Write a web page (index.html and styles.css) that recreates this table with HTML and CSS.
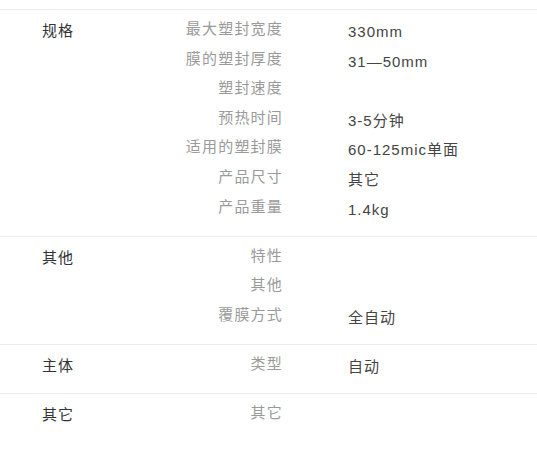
FILE: index.html
```html
<!DOCTYPE html>
<html lang="zh-CN">
<head>
<meta charset="utf-8">
<title>规格参数</title>
<link rel="stylesheet" href="styles.css">
</head>
<body>
<div class="spec">
  <section class="group">
    <div class="group-title">规格</div>
    <div class="rows">
      <div class="row"><div class="label">最大塑封宽度</div><div class="value">330mm</div></div>
      <div class="row"><div class="label">膜的塑封厚度</div><div class="value">31—50mm</div></div>
      <div class="row"><div class="label">塑封速度</div><div class="value"></div></div>
      <div class="row"><div class="label">预热时间</div><div class="value">3-5分钟</div></div>
      <div class="row"><div class="label">适用的塑封膜</div><div class="value">60-125mic单面</div></div>
      <div class="row"><div class="label">产品尺寸</div><div class="value">其它</div></div>
      <div class="row"><div class="label">产品重量</div><div class="value">1.4kg</div></div>
    </div>
  </section>
  <section class="group">
    <div class="group-title">其他</div>
    <div class="rows">
      <div class="row"><div class="label">特性</div><div class="value"></div></div>
      <div class="row"><div class="label">其他</div><div class="value"></div></div>
      <div class="row"><div class="label">覆膜方式</div><div class="value">全自动</div></div>
    </div>
  </section>
  <section class="group">
    <div class="group-title">主体</div>
    <div class="rows">
      <div class="row"><div class="label">类型</div><div class="value">自动</div></div>
    </div>
  </section>
  <section class="group">
    <div class="group-title">其它</div>
    <div class="rows">
      <div class="row"><div class="label">其它</div><div class="value"></div></div>
    </div>
  </section>
</div>
</body>
</html>
```
FILE: styles.css
```css
html, body {
  margin: 0;
  padding: 0;
  background: #fff;
}
body {
  font-family: "Liberation Sans", "Noto Sans CJK SC", sans-serif;
  font-size: 15px;
  letter-spacing: 1px;
  color: #333;
}
.spec {
  margin-top: 9px;
}
.group {
  display: grid;
  grid-template-columns: 141px 1fr;
  border-top: 1px solid #ececec;
  padding: 9px 0 9.5px;
}
.group-title {
  padding-left: 42px;
  padding-top: 2px;
  line-height: 20px;
  color: #333;
}
.rows {
  display: flex;
  flex-direction: column;
}
.row {
  display: grid;
  grid-template-columns: 142px 1fr;
  height: 29.6px;
  align-items: start;
}
.label {
  text-align: right;
  line-height: 20px;
  color: #9a9a9a;
  letter-spacing: 1.2px;
}
.value {
  padding-left: 65px;
  padding-top: 3px;
  line-height: 20px;
  color: #444;
}
```
